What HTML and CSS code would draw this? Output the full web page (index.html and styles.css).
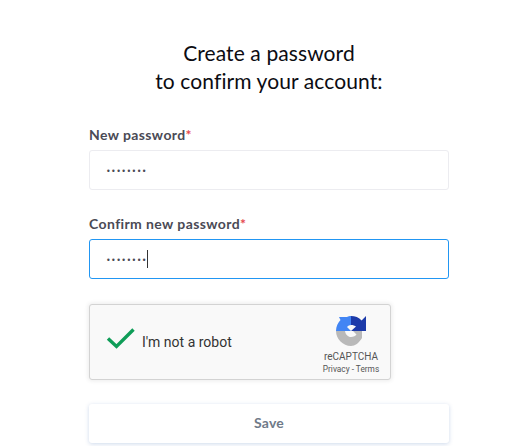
FILE: index.html
```html
<html>

<head>
  <link rel="stylesheet" href="styles.css">
</head>

<body>

  <div class="container">
    <h1 class="title">Create a password<br>to confirm your account:</h1>

    <div class="field">
      <p class="field-label">New password<span class="required">*</span></p>
      <div class="field-input"><span class="dots">••••••••</span></div>
    </div>

    <div class="field">
      <p class="field-label">Confirm new password<span class="required">*</span></p>
      <div class="field-input field-input-focus"><span class="dots">••••••••</span><span class="caret"></span></div>
    </div>

    <div class="captcha">
      <svg class="captcha-check" width="30" height="22" viewBox="0 0 30 22">
        <path d="M2 11.5 L10.5 19.5 L27.5 2.5" fill="none" stroke="#0f9d58" stroke-width="3.4" />
      </svg>
      <span class="captcha-text">I'm not a robot</span>
      <div class="captcha-brand">
        <svg class="captcha-logo" width="30" height="31" viewBox="0 0 30 31">
          <path d="M15 0 C19 0 23 1.5 25.6 4.4 L30 0 V15 H15 L20 10.5 C19 9.7 17 9 15 9 Z" fill="#1c3aa9" />
          <path d="M15 0 V9 C13.5 9 12 9.7 11 11 L15 15 H0 C0 10.5 2 6.5 4.5 4 L3 1 H11 C12.5 0.3 13.5 0 15 0 Z" fill="#4285f4" />
          <path d="M0 15 H9 C9.5 18.5 12 21 15 21 C17.5 21 19.5 20 20.5 18.5 L17 15 H26 V22 C23 27 19 30 15 30 C7 30 0 23 0 15 Z" fill="#b9b9b9" />
        </svg>
        <span class="captcha-name">reCAPTCHA</span>
        <span class="captcha-links">Privacy - Terms</span>
      </div>
    </div>

    <button class="save">Save</button>
  </div>

</body>

</html>
```

FILE: styles.css
```css
body {
  margin: 0;
  background-color: #fff;
  font-family: "Lato", sans-serif;
  overflow: hidden;
}

.container {
  width: 360px;
  margin-left: 89px;
  padding-top: 39px;
}

.title {
  margin: 0 0 30px -10px;
  width: 380px;
  font-size: 21px;
  font-weight: 400;
  line-height: 28px;
  letter-spacing: 0.1px;
  text-align: center;
  color: #0c0c12;
}

.field {
  margin-bottom: 24px;
}

.field-label {
  margin: 0 0 5px 0;
  font-size: 14px;
  font-weight: 700;
  line-height: 20px;
  letter-spacing: 0.4px;
  color: #4a4a55;
}

.required {
  color: #e5484d;
}

.field-input {
  display: flex;
  align-items: center;
  height: 40px;
  box-sizing: border-box;
  padding-left: 16px;
  border: 1px solid #ececf0;
  border-radius: 3px;
}

.field-input-focus {
  border-color: #2196f3;
}

.dots {
  padding-top: 2px;
  font-family: "DejaVu Sans", sans-serif;
  font-size: 8px;
  letter-spacing: 0.4px;
  color: #4a4a55;
}

.caret {
  width: 1px;
  height: 18px;
  background-color: #333;
}

.captcha {
  display: flex;
  align-items: center;
  width: 302px;
  height: 76px;
  box-sizing: border-box;
  margin-top: 25px;
  padding-left: 16px;
  border: 1px solid #d3d3d3;
  border-radius: 3px;
  background-color: #f9f9f9;
  box-shadow: 0 0 4px 1px rgba(0, 0, 0, 0.08);
}

.captcha-check {
  margin-top: -8px;
}

.captcha-text {
  margin-left: 6px;
  font-family: "Roboto", sans-serif;
  font-size: 14px;
  color: #333;
}

.captcha-brand {
  display: flex;
  flex-direction: column;
  align-items: center;
  align-self: flex-start;
  width: 70px;
  margin-left: auto;
  margin-right: 4px;
  padding-top: 11px;
}

.captcha-logo {
  margin-bottom: 3px;
}

.captcha-name {
  font-family: "Roboto", sans-serif;
  font-size: 10px;
  line-height: 13px;
  color: #555;
}

.captcha-links {
  font-family: "Roboto", sans-serif;
  font-size: 8.3px;
  line-height: 12px;
  color: #555;
}

.save {
  display: block;
  width: 360px;
  height: 39px;
  margin-top: 24px;
  padding-bottom: 3px;
  border: 0;
  border-radius: 3px;
  background-color: #fff;
  box-shadow: 0 1px 4px rgba(90, 130, 190, 0.3);
  font-family: "Lato", sans-serif;
  font-size: 14px;
  font-weight: 700;
  letter-spacing: 0.2px;
  color: #6f7a88;
}
```
